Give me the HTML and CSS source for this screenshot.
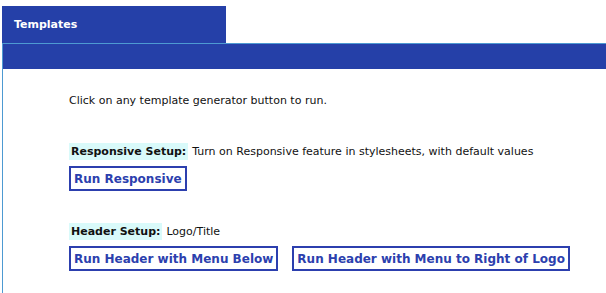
FILE: index.html
```html
<!DOCTYPE html>
<html>
<head>
<meta charset="utf-8">
<link rel="stylesheet" href="styles.css">
</head>
<body>
<div class="tabs"><div class="tab">Templates</div></div>
<div class="panel">
  <div class="bar"></div>
  <div class="content">
    <p class="intro">Click on any template generator button to run.</p>
    <div class="group">
      <div class="line"><span class="label">Responsive Setup:</span> <span class="desc">Turn on Responsive feature in stylesheets, with default values</span></div>
      <div class="buttons"><button class="btn">Run Responsive</button></div>
    </div>
    <div class="group">
      <div class="line"><span class="label">Header Setup:</span> <span class="desc">Logo/Title</span></div>
      <div class="buttons"><button class="btn">Run Header with Menu Below</button><button class="btn">Run Header with Menu to Right of Logo</button></div>
    </div>
  </div>
</div>
</body>
</html>
```
FILE: styles.css
```css
html, body { margin: 0; padding: 0; background: #fff; }
body {
  font-family: Verdana, "DejaVu Sans", sans-serif;
  font-size: 11px;
  color: #111;
  padding: 6px 0 0 2px;
  overflow: hidden;
}
.tabs { display: flex; }
.tab {
  width: 212px;
  height: 37px;
  padding-left: 12px;
  background: #2540a8;
  color: #fff;
  font-weight: bold;
  font-size: 11px;
  display: flex;
  align-items: center;
}
.panel {
  border-top: 1px solid #4d9ad2;
  border-left: 1px solid #4d9ad2;
  height: 260px;
}
.bar { height: 25px; background: #2540a8; }
.content { padding: 24px 0 0 66px; }
.intro { margin: 0; line-height: 15px; }
.group { margin-top: 35px; }
.group + .group { margin-top: 32px; }
.line { line-height: 17px; display: flex; align-items: center; gap: 4px; }
.label { background: #d9fafa; font-weight: bold; padding: 0 2px; }
.buttons { display: flex; gap: 14px; margin-top: 6px; }
.btn {
  font-family: Verdana, "DejaVu Sans", sans-serif;
  font-size: 12px;
  font-weight: bold;
  color: #2c3fae;
  background: #fff;
  border: 2px solid #2c3fae;
  height: 25px;
  padding: 0 3px;
  margin: 0;
  border-radius: 0;
  white-space: nowrap;
}
```
